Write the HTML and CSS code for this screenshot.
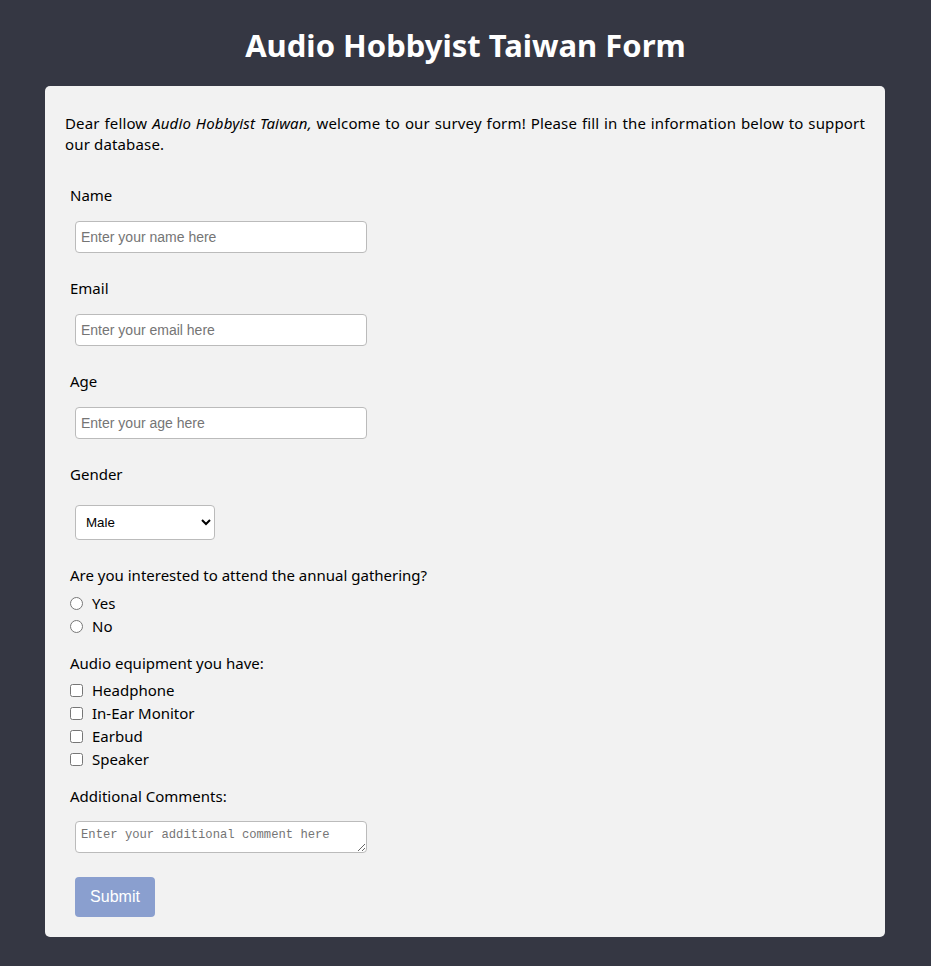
FILE: index.html
```html
<!DOCTYPE html>
<html lang="en">
<head>
<meta charset="utf-8">
<title>Audio Hobbyist Taiwan Form</title>
<link rel="stylesheet" href="styles.css">
</head>
<body>
<h1 class="title">Audio Hobbyist Taiwan Form</h1>
<main class="card">
  <p class="intro">Dear fellow <em>Audio Hobbyist Taiwan,</em> welcome to our survey form! Please fill in the information below to support our database.</p>
  <form class="form">
    <div class="group">
      <label class="label" for="name">Name</label>
      <input class="field" id="name" type="text" placeholder="Enter your name here">
    </div>
    <div class="group">
      <label class="label" for="email">Email</label>
      <input class="field" id="email" type="email" placeholder="Enter your email here">
    </div>
    <div class="group">
      <label class="label" for="age">Age</label>
      <input class="field" id="age" type="number" placeholder="Enter your age here">
    </div>
    <div class="group">
      <label class="label" for="gender">Gender</label>
      <select class="select" id="gender">
        <option>Male</option>
        <option>Female</option>
        <option>Other</option>
      </select>
    </div>
    <div class="group group-tight">
      <p class="label">Are you interested to attend the annual gathering?</p>
      <div class="options">
        <label class="option"><input class="box" type="radio" name="attend">Yes</label>
        <label class="option"><input class="box" type="radio" name="attend">No</label>
      </div>
    </div>
    <div class="group group-tight">
      <p class="label">Audio equipment you have:</p>
      <div class="options options-checks">
        <label class="option"><input class="box" type="checkbox">Headphone</label>
        <label class="option"><input class="box" type="checkbox">In-Ear Monitor</label>
        <label class="option"><input class="box" type="checkbox">Earbud</label>
        <label class="option"><input class="box" type="checkbox">Speaker</label>
      </div>
    </div>
    <div class="group group-tight">
      <label class="label" for="comments">Additional Comments:</label>
      <textarea class="field textarea" id="comments" placeholder="Enter your additional comment here"></textarea>
    </div>
    <button class="submit" type="submit">Submit</button>
  </form>
</main>
</body>
</html>
```
FILE: styles.css
```css
* {
  box-sizing: border-box;
}

html, body {
  margin: 0;
  padding: 0;
}

body {
  background: #353743;
  font-family: "Noto Sans", "Open Sans", sans-serif;
  font-size: 15px;
  color: #000;
  min-height: 966px;
}

.title {
  margin: 0;
  padding: 26px 0 22px;
  line-height: 38px;
  font-size: 31px;
  font-weight: 700;
  text-align: center;
  color: #fff;
}

.card {
  width: 840px;
  margin: 0 0 0 45px;
  background: #f2f2f2;
  border-radius: 5px;
  padding: 27px 20px 20px;
}

.intro {
  margin: 0;
  line-height: 21px;
  text-align: justify;
  letter-spacing: 0.15px;
}

.form {
  display: flex;
  flex-direction: column;
  align-items: flex-start;
  padding-left: 5px;
  margin-top: 30px;
}

.group {
  display: flex;
  flex-direction: column;
  align-items: flex-start;
  margin-bottom: 25px;
}

.group-tight {
  margin-bottom: 15px;
}

.label {
  margin: 0;
  line-height: 21px;
  display: block;
}

.field {
  margin: 15px 0 0 5px;
  width: 292px;
  height: 32px;
  border: 1px solid #bbb;
  border-radius: 4px;
  background: #fff;
  padding: 0 5px;
  font-family: "Liberation Sans", Arial, sans-serif;
  font-size: 14px;
  color: #000;
  outline: none;
}

.field::placeholder {
  color: #757575;
}

.textarea {
  display: block;
  margin-top: 14px;
  padding: 6px 5px 4px;
  font-family: "Liberation Mono", monospace;
  font-size: 12.2px;
  line-height: 15px;
  resize: vertical;
}

.select {
  margin: 20px 0 0 5px;
  width: 140px;
  height: 35px;
  border: 1px solid #bbb;
  border-radius: 4px;
  background: #fff;
  padding: 0 6px;
  font-family: "Liberation Sans", Arial, sans-serif;
  font-size: 13.33px;
  color: #000;
}

.options {
  display: flex;
  flex-direction: column;
  margin-top: 6px;
}

.options-checks {
  margin-top: 5px;
}

.option {
  display: flex;
  align-items: center;
  height: 23px;
  line-height: 23px;
}

.box {
  width: 13px;
  height: 13px;
  margin: 0 9px 0 0;
}

.submit {
  margin: 9px 0 0 5px;
  width: 80px;
  height: 40px;
  border: none;
  border-radius: 4px;
  background: #8a9fcf;
  color: #fff;
  font-family: "Liberation Sans", Arial, sans-serif;
  font-size: 16px;
}
```
